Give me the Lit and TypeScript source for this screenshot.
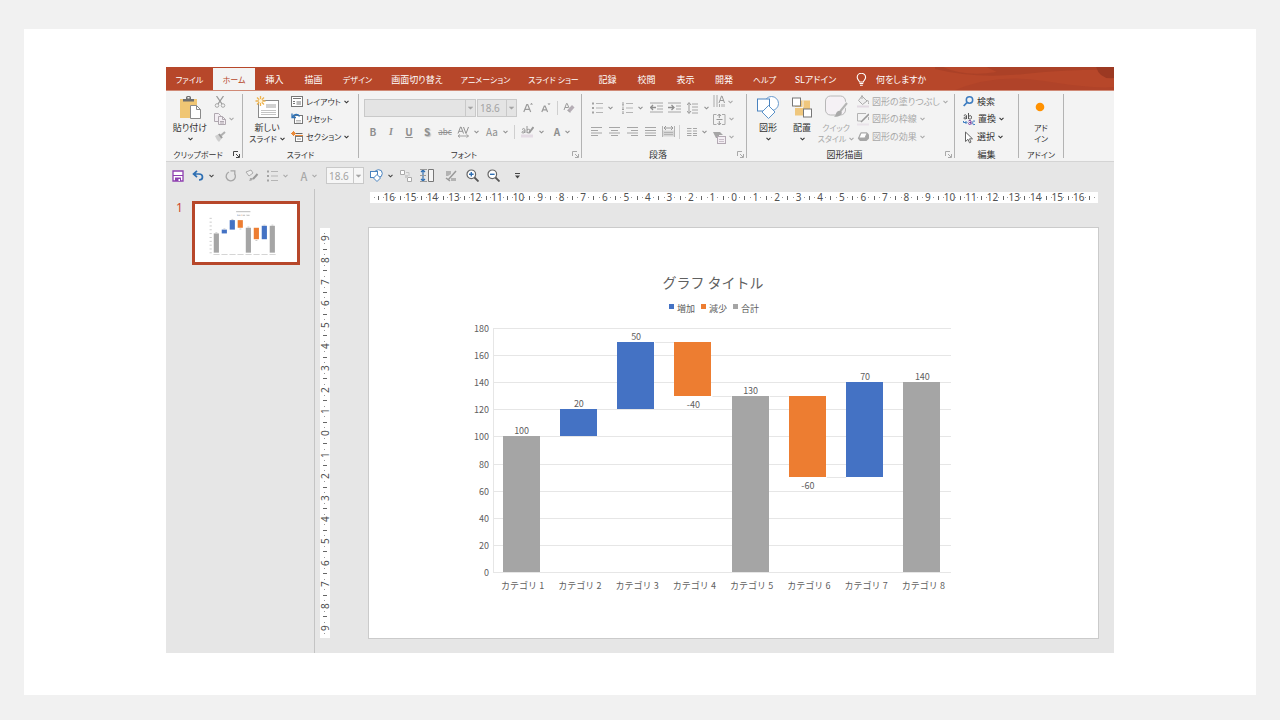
import { LitElement, html, svg, css, type TemplateResult } from "lit";
import { customElement, property, state } from "lit/decorators.js";
import { classMap } from "lit/directives/class-map.js";

type Frag = unknown;

const ic = (w: number, h: number, body: Frag) =>
  html`<svg width=${w} height=${h} viewBox="0 0 ${w} ${h}" fill="none" aria-hidden="true">${body}</svg>`;

const caret = () => ic(5, 4, svg`<path d="M.5 .8 2.5 2.8 4.5 .8" stroke="currentColor" stroke-width="1.1"/>`);

const lines = (list: number[][], c = "#a6a6a6") =>
  list.map(([x1, x2, y]) => svg`<path d="M${x1} ${y}H${x2}" stroke=${c}/>`);

const icons = {
  paste: ic(24, 25, svg`
    <rect x="2" y="4" width="17" height="19" fill="#f0c674"/>
    <path d="M5 4h3V2.500a1.500 1.500 0 0 1 1.500-1.500h2a1.500 1.500 0 0 1 1.500 1.500V4h3v2.500H5z" fill="#6d6d6d"/>
    <rect x="9.500" y="2" width="2" height="1.500" fill="#f3f3f3"/>
    <path d="M12.500 10.500h6l4 4v9h-10z" fill="#fff" stroke="#8a8a8a"/>
    <path d="M18.500 10.500v4h4" stroke="#8a8a8a"/>`),
  cut: ic(12, 12, svg`
    <path d="M2.500 0 8 8M9.500 0 4 8" stroke="#9a9a9a" stroke-width="1.300"/>
    <circle cx="3" cy="9.500" r="1.800" stroke="#a8a8a8"/><circle cx="9" cy="9.500" r="1.800" stroke="#a8a8a8"/>`),
  copy: ic(12, 12, svg`
    <path d="M.5 .5h4l2 2v6h-6z" fill="#f3eef3" stroke="#b0a8b0"/>
    <path d="M4.500 3.500h4l3 3v5h-7zM8.500 3.500v3h3M6 8.500h4M6 10h4" fill="#f3eef3" stroke="#b0a8b0"/>`),
  brush: ic(12, 12, svg`
    <path d="M1 5 5 3 8 7 5 11 3 9z" fill="#cfcfcf"/>
    <path d="M5 3 8 7" stroke="#9c9c9c" stroke-width="2"/><path d="M7 4.500 11 1" stroke="#b0b0b0" stroke-width="2"/>`),
  newSlide: ic(24, 23, svg`
    <rect x="3.500" y="4.500" width="20" height="17" fill="#fff" stroke="#8a8a8a"/>
    <rect x="11" y="8" width="10" height="4" fill="#d0d0d0"/><path d="M6 14.500h15M6 16.500h15M6 18.500h15" stroke="#c4c4c4"/>
    <path d="M5.500 0v10M.5 5h10M2 1.500l7 7M9 1.500l-7 7" stroke="#eeb34e" stroke-width="1.300"/>
    <circle cx="5.500" cy="5" r="2" fill="#fff3d6"/>`),
  layout: ic(12, 12, svg`
    <rect x=".5" y=".5" width="11" height="10" fill="#fff" stroke="#777"/>
    <path d="M2 2.500h8M2 5.500h2M2 7.500h2" stroke="#777"/><rect x="5.500" y="5" width="4.500" height="4" fill="#bbb"/>`),
  reset: ic(12, 12, svg`
    <rect x="3.500" y="2.500" width="8" height="8" fill="#fff" stroke="#777"/>
    <path d="M5 7.500h5M5 9h5" stroke="#bbb"/><path d="M1 .5v4h4M1.500 4C3 1 7 .5 8.500 3.500" stroke="#2f73b8" stroke-width="1.300"/>`),
  section: ic(12, 12, svg`
    <path d="M4.500 2.500h7" stroke="#666"/><rect x="4.500" y="5.500" width="7" height="5" fill="#fff" stroke="#777"/>
    <path d="M6 8h4" stroke="#999"/><path d="M2.500 0v5M0 2.500h5M1 1l3 3M4 1 1 4" stroke="#e98b3c"/>
    <path d="M4 4.500h8" stroke="#e98b3c"/>`),
  launcher: ic(7, 7, svg`<path d="M.5 5V.5H5M3 3l3 3M6.500 3v3.500H3" stroke="currentColor"/>`),
  growA: ic(10, 11, svg`<path d="M.8 10 3.800 2.500h.9L7.700 10M2 7.300h4.500" stroke="#9b9b9b" stroke-width="1.200"/><path d="M7 2.500 8.500 1 10 2.500z" fill="#888"/>`),
  shrinkA: ic(10, 11, svg`<path d="M.8 10 3.300 4h.8L6.600 10M1.800 7.800h3.800" stroke="#9b9b9b" stroke-width="1.200"/><path d="M6.500 1.500h3L8 3z" fill="#888"/>`),
  clear: ic(12, 12, svg`
    <path d="M1 8 3.500 1.500h.7L6 6M2 5.500h3" stroke="#9b9b9b"/><path d="M4.500 8 9 3l2.500 2.500L7 10.500z" fill="#b5adb5"/>
    <path d="M4.500 8 7 10.500" stroke="#999"/>`),
  spacing: ic(13, 12, svg`
    <path d="M1 7.500 3.500 1h.6l2.400 6.500M2 5.300h3.600M6.500 1l2.500 6.500L11.500 1" stroke="#929292"/>
    <path d="M1 10h10.500M3 8.500 1 10l2 1.500M9.500 8.500l2 1.500-2 1.500" stroke="#a3a3a3"/>`),
  marker: ic(13, 13, svg`
    <path d="M1 4.500q2-2 3 0v3.300M4 6C1 5.500 0 8 2 8q1 0 2-1M6 1v7M6 5q3-2 3 1t-3 1.500" stroke="#969696"/>
    <path d="M12.500 2 8 8" stroke="#999" stroke-width="2"/><path d="M0 11h12" stroke="#e4dbe4" stroke-width="3"/>`),
  bullets: ic(11, 12, svg`${[1.5, 6, 10.5].map((y) => svg`<rect x="0" y=${y - 1} width="2" height="2" fill="#a3a3a3"/><path d="M4 ${y}h7" stroke="#b5b5b5"/>`)}`),
  numbers: ic(11, 12, svg`${[1.5, 6, 10.5].map((y) => svg`<path d="M1 ${y - 1.5}v3M0 ${y + 1.5}h2" stroke="#9f9f9f"/><path d="M4 ${y}h7" stroke="#b5b5b5"/>`)}`),
  outdent: ic(13, 11, svg`${lines([[0, 13, 1], [7, 13, 4], [7, 13, 7], [0, 13, 10]])}<path d="M0 5.500h6M3 3 .7 5.500 3 8" stroke="#8e8e8e" stroke-width="1.300"/>`),
  indent: ic(13, 11, svg`${lines([[0, 13, 1], [8, 13, 4], [8, 13, 7], [0, 13, 10]])}<path d="M0 5.500h6M3.500 3 6 5.500 3.500 8" stroke="#8e8e8e" stroke-width="1.300"/>`),
  lineSpace: ic(12, 12, svg`${lines([[5, 11, 2], [5, 11, 5], [5, 11, 8], [5, 11, 11]])}<path d="M2 1v10M0 3l2-2.500L4 3M0 9l2 2.500L4 9" stroke="#999"/>`),
  left: ic(11, 9, svg`${lines([[0, 11, .5], [0, 7, 3.5], [0, 11, 6], [0, 7, 8.5]])}`),
  center: ic(11, 9, svg`${lines([[0, 11, .5], [2, 9, 3.5], [0, 11, 6], [2, 9, 8.5]])}`),
  right: ic(11, 9, svg`${lines([[0, 11, .5], [4, 11, 3.5], [0, 11, 6], [4, 11, 8.5]])}`),
  justify: ic(11, 9, svg`${lines([[0, 11, .5], [0, 11, 3.5], [0, 11, 6], [0, 11, 8.5]])}`),
  distribute: ic(13, 13, svg`
    <path d="M.5 1v11M12.500 1v11" stroke="#b3b3b3"/><path d="M2 3h9M4 1 2 3l2 2M9 1l2 2-2 2" stroke="#999"/>
    <rect x="1" y="5.500" width="11" height="6" fill="#d6d6d6"/><path d="M2 7.500h9M2 9.500h9" stroke="#b3b3b3"/>`),
  columns: ic(10, 8, svg`${lines([[0, 4.5, .5], [0, 4.5, 3], [0, 4.5, 5.5], [0, 4.5, 7.5], [6, 10, .5], [6, 10, 3], [6, 10, 5.5], [6, 10, 7.5]])}`),
  textDir: ic(12, 13, svg`<path d="M1 0v12M4 0v12M9 9v3M6.500 9v3M11 9v3" stroke="#aaa"/><path d="M6 8 8.500 1h.5L11.500 8M7 5.500h4" stroke="#999"/>`),
  alignText: ic(13, 13, svg`<path d="M3.500 1.500h-3v10h3M9 1.500h3v10H9" stroke="#aaa"/><path d="M6.300 1v4M6.300 8v4M4.500 3l1.800-2L8 3M4.500 10l1.800 2L8 10M3.500 6.500h6" stroke="#999"/>`),
  smartArt: ic(13, 13, svg`<path d="M0 1h7l3 3H6v3H3z" fill="#a5a5a5"/><rect x="4.500" y="5.500" width="8" height="7" fill="#f3eef3" stroke="#b3a9b3"/><path d="M6 8.500h5M6 10.500h5" stroke="#c9bfc9"/>`),
  shapes: ic(24, 24, svg`
    <circle cx="15.500" cy="8" r="7" fill="#fff" stroke="#6a9ccf"/>
    <rect x="1.500" y="3.500" width="12" height="12" fill="#fff" stroke="#4a83bf"/>
    <path d="M12.500 10 19 16.500 12.500 23 6 16.500z" fill="#fff" stroke="#5b92c8"/>`),
  arrange: ic(22, 22, svg`
    <rect x="4" y="4" width="15" height="15" fill="#efc77d"/><path d="M4 11h8v-7" stroke="#f3f3f3"/>
    <rect x="1.500" y="1.500" width="8" height="8" fill="#fff" stroke="#777"/><rect x="12.500" y="12.500" width="8" height="8" fill="#fff" stroke="#777"/>`),
  quick: ic(23, 24, svg`
    <rect x=".5" y=".5" width="20" height="19" rx="5" fill="#f5f1f5" stroke="#b8b8b8"/>
    <path d="M22.500 7 15 16" stroke="#f3f3f3" stroke-width="4"/><path d="M22 7.500 15.500 15.500" stroke="#b4b4b4" stroke-width="2"/>
    <path d="M16 15q2 3-1 5-3 2-6 1 2-1 2-3 1-3 5-3z" fill="#a9a9a9"/>`),
  fill: ic(12, 13, svg`<path d="M5 1 10 6 5.500 9.500 1.500 5.500z" fill="#eee" stroke="#aaa"/><path d="M5 4V0M10.500 5q2 3 1 4" stroke="#aaa"/><path d="M0 11.500h12" stroke="#e1d9e1" stroke-width="2"/>`),
  outline: ic(12, 13, svg`<path d="M9 .5H.5V8H4M11.500 4v3" stroke="#b3b3b3"/><path d="M12 1 5.500 7.500 4 9" stroke="#999" stroke-width="1.600"/><path d="M0 11.500h12" stroke="#e9e3e9" stroke-width="2"/>`),
  effects: ic(12, 11, svg`<path d="M3.500.5h6.500l2 2v4l-2.500 2.500H3L.8 6.500z" fill="#a7a7a7"/><path d="M4 1h6l-2 5H2z" fill="#fff" stroke="#aaa"/>`),
  search: ic(11, 11, svg`<circle cx="6.500" cy="4" r="3.200" stroke="#3d7cc0" stroke-width="1.500"/><path d="M4 6.500.7 10" stroke="#3d7cc0" stroke-width="1.800"/>`),
  replace: ic(12, 13, svg`
    <path d="M.8 2.500q2-1.500 2.700 0V6M3.500 4C.5 3.500.5 6 2 6q1 0 1.500-1M5.500 0v6M5.500 3.500q3-2 3 .8t-3 1.200" stroke="#555"/>
    <path d="M5.500 8q2-1.500 2.500 0v3.500M8 9.500c-3-.5-3 2-1.500 2q1 0 1.500-1" stroke="#7a3fa0"/><path d="M12 8.300Q9.700 7 9.700 9.800t2.300 1.500" stroke="#3d7cc0"/>
    <path d="M.5 8v1.500h3M2.500 8 4 9.500 2.500 11" stroke="#3d7cc0"/>`),
  select: ic(11, 13, svg`<path d="M2.500 1v9.500L5 8.300l1.500 3.500 1.500-.7-1.500-3.300h3z" fill="#fff" stroke="#666"/>`),
  dot: ic(24, 20, svg`<circle cx="11" cy="9.500" r="4.300" fill="#ff9100"/>`),
  bulb: ic(11, 13, svg`<path d="M3.500 9C3.500 7.500 1.200 6.800 1.200 4.300a4.200 4 0 0 1 8.400 0C9.600 6.800 7.300 7.500 7.300 9zM3.500 10.500h3.800M4 12.200h2.800" stroke="#fff" stroke-width="1.100"/>`),
  save: ic(12, 12, svg`<path d="M1 1h10v10H1z" fill="#fff" stroke="#8e3fb0" stroke-width="1.300"/><path d="M1 5.500h10" stroke="#8e3fb0"/><path d="M3 7.500h6V11H3z" fill="#8e3fb0"/><path d="M6.500 9H8v2H6.500z" fill="#fff"/>`),
  undo: ic(12, 11, svg`<path d="M5 .8 1.500 4 5 7.200M2 4h5q3.500 0 3.500 3T7 10" stroke="#2f6fb3" stroke-width="1.700"/>`),
  redo: ic(12, 12, svg`<path d="M4 2A4.600 4.600 0 1 0 9.500 3.500M5.500 .8h4.300V4.500" stroke="#a6a6a6" stroke-width="1.300"/>`),
  format: ic(14, 13, svg`<path d="M1 3 6 1l2 3-4 3z" fill="#eee" stroke="#aaa"/><path d="M12.500 5 8 10" stroke="#999" stroke-width="2"/><path d="M8 9q0 3-4 3 1-1 1-3z" fill="#aaa"/>`),
  shapesS: ic(13, 13, svg`<circle cx="8.500" cy="4.500" r="3.800" fill="#fff" stroke="#4a83bf"/><rect x=".5" y="2.500" width="7" height="6" fill="#fff" stroke="#4a83bf"/><path d="M7 5.500 10.500 9 7 12.500 3.500 9z" fill="#fff" stroke="#4a83bf"/>`),
  group: ic(13, 13, svg`<path d="M.5 1.500h4v4h-4zM7.500 8.500h4v4h-4z" fill="#fff" stroke="#aaa"/><path d="M5 6h3v3H5z" fill="#ccc"/><path d="M6 3.500h3V7" stroke="#c5c5c5"/>`),
  height: ic(15, 13, svg`<path d="M3 1v11M1 3l2-2 2 2M1 10l2 2 2-2" stroke="#2f6fb3" stroke-width="1.200"/><path d="M0 .5h7M0 12.500h7M0 6.500h6" stroke="#999"/><path d="M8.500.5h5v12h-5z" fill="#f5f5f5" stroke="#777"/>`),
  tools: ic(12, 12, svg`<path d="M1 1h5v3L3 6H1zM6 8h5v3H6z" fill="#b3b3b3"/><path d="M11 1 3 10M1 8l4 3" stroke="#999" stroke-width="1.500"/>`),
  zoomIn: ic(13, 13, svg`<circle cx="5.300" cy="5.300" r="4.300" fill="#fff" stroke="#666" stroke-width="1.200"/><path d="m8.500 8.500 4 4" stroke="#555" stroke-width="1.800"/><path d="M5.300 3v4.600M3 5.300h4.600" stroke="#2f6fb3" stroke-width="1.400"/>`),
  zoomOut: ic(13, 13, svg`<circle cx="5.300" cy="5.300" r="4.300" fill="#fff" stroke="#666" stroke-width="1.200"/><path d="m8.500 8.500 4 4" stroke="#555" stroke-width="1.800"/><path d="M3 5.300h4.600" stroke="#2f6fb3" stroke-width="1.400"/>`),
  more: ic(7, 6, svg`<path d="M1 .5h5" stroke="#444"/><path d="M1 2.500h5L3.500 5.500z" fill="#444"/>`),
};

/* Katakana-only captions are set one step smaller than mixed ones. */
const kana = (t: string) => /^[\u30a0-\u30ff\s]+$/.test(t);
const caption = (t: string) => html`<span class=${classMap({ kana: kana(t) })}>${t}</span>`;

/* Waterfall chart ------------------------------------------------------- */

type Kind = "up" | "down" | "total";
interface Step { value: number; kind: Kind }

const STEPS: Step[] = [
  { value: 100, kind: "total" }, { value: 20, kind: "up" }, { value: 50, kind: "up" }, { value: -40, kind: "down" },
  { value: 130, kind: "total" }, { value: -60, kind: "down" }, { value: 70, kind: "up" }, { value: 140, kind: "total" },
];
const COLORS: Record<Kind, string> = { up: "#4472c4", down: "#ed7d31", total: "#a5a5a5" };

@customElement("waterfall-chart")
class WaterfallChart extends LitElement {
  @property({ type: Boolean }) mini = false;

  static styles = css`
    :host { display: block; font-feature-settings: normal; }
    svg { display: block; width: 100%; height: 100%; }
    text { font-family: "Noto Sans CJK JP", sans-serif; font-size: 9px; fill: #606060; }
    .title { font-size: 14px; }
    .mid { text-anchor: middle; }
    .end { text-anchor: end; }
    .grid { stroke: #e6e6e6; }
    .smudge { fill: #c4c4c4; }
  `;

  render() {
    const left = 124, right = 582, top = 100, base = 344, max = 180;
    const pitch = (right - left) / STEPS.length;
    const y = (v: number) => base - (v / max) * (base - top);
    const snap = (v: number) => Math.round(v) + 0.5;
    let level = 0;
    const bars = STEPS.map((s, i) => {
      const from = s.kind === "total" ? 0 : level;
      level = s.kind === "total" ? s.value : level + s.value;
      return { ...s, hi: Math.max(from, level), lo: Math.min(from, level), end: level, cx: left + pitch * (i + 0.5) };
    });
    const half = 19;
    const label = (x: number, cy: number, t: string, cls: string, w: number, h = 6) =>
      this.mini
        ? svg`<rect class="smudge" x=${cls === "end" ? x - w : x - w / 2} y=${cy - h / 2} width=${w} height=${h}/>`
        : svg`<text class=${cls} x=${x} y=${cy + 3}>${t}</text>`;
    return html`<svg viewBox="0 0 729 410" preserveAspectRatio="none" role="img" aria-label="グラフ タイトル">
      ${this.mini
        ? svg`<rect class="smudge" x="294" y="50" width="102" height="8"/>`
        : svg`<text class="mid title" x="344" y="60">グラフ タイトル</text>`}
      ${([["up", "増加", 299], ["down", "減少", 331], ["total", "合計", 363]] as [Kind, string, number][]).map(([k, t, x]) => svg`
        <rect x=${x + 1} y="76" width="5" height="5" fill=${COLORS[k]}/>
        ${this.mini ? label(x + 18, 80, t, "mid", 18, 8) : svg`<text x=${x + 9} y="84">${t}</text>`}`)}
      ${Array.from({ length: 10 }, (_, i) => i * 20).map((v) => svg`
        ${this.mini ? "" : svg`<path class="grid" d="M${left} ${snap(y(v))}H${right}"/>`}
        ${label(120, y(v) + 1, String(v), "end", 16)}`)}
      ${this.mini ? "" : svg`<path class="grid" d="M${left + .5} ${top}V${base}"/>`}
      ${this.mini ? "" : bars.slice(0, -1).map((b) => svg`<path class="grid" d="M${b.cx + half} ${snap(y(b.end))}h${pitch - half * 2}"/>`)}
      ${bars.map((b, i) => svg`
        <rect x=${Math.round(b.cx - half)} y=${Math.round(y(b.hi))} width=${half * 2 - 1}
          height=${Math.round(y(b.lo)) - Math.round(y(b.hi))} fill=${COLORS[b.kind]}/>
        ${label(b.cx, b.value < 0 ? y(b.lo) + 9 : y(b.hi) - 5, String(b.value), "mid", 14)}
        ${label(b.cx + 1, 358, `カテゴリ ${i + 1}`, "mid", 44, 5)}`)}
    </svg>`;
  }
}

/* Ruler ----------------------------------------------------------------- */

@customElement("slide-ruler")
class SlideRuler extends LitElement {
  @property({ type: Number }) reach = 16;
  @property({ type: Boolean, reflect: true }) vertical = false;

  static styles = css`
    :host { display: flex; background: #fff; color: #505050; font: 10px/11px "Noto Sans", sans-serif; align-items: center; }
    :host([vertical]) { writing-mode: vertical-rl; transform: rotate(180deg); }
    .cell { flex: 1 1 0; display: flex; align-items: center; justify-content: center; gap: 2px; min-inline-size: 0; }
    .wide { gap: 0; }
    .dot { inline-size: 1px; block-size: 1px; background: #999; }
    .tick { inline-size: 1px; block-size: 4px; background: #666; }
    .end { inline-size: 8px; display: flex; align-items: center; justify-content: space-evenly; }
  `;

  render() {
    const nums = Array.from({ length: this.reach * 2 + 1 }, (_, i) => Math.abs(i - this.reach));
    const tick = html`<span class="tick"></span>`;
    const dot = html`<span class="dot"></span>`;
    return html`
      ${this.vertical ? "" : html`<span class="end">${dot}</span>${tick}`}
      ${nums.map((n, i) => html`${i ? tick : ""}<span class=${classMap({ cell: true, wide: n > 9 })}>${dot}<span>${n}</span>${dot}</span>`)}
      ${this.vertical ? "" : html`${tick}<span class="end">${dot}</span>`}
    `;
  }
}

/* Application ----------------------------------------------------------- */

const TABS = ["ファイル", "ホーム", "挿入", "描画", "デザイン", "画面切り替え", "アニメーション", "スライド ショー",
  "記録", "校閲", "表示", "開発", "ヘルプ", "SLアドイン"];

@customElement("app-root")
class AppRoot extends LitElement {
  @state() private tab = 1;

  static styles = css`
    :host {
      display: flex; box-sizing: border-box; min-height: 100vh; padding: 29px 24px 25px; background: #f1f1f1;
      font: 9px/12px "Noto Sans CJK JP", sans-serif; font-feature-settings: "palt"; color: #333;
    }
    * { box-sizing: border-box; }
    svg { display: block; flex: none; }
    button, select {
      font: inherit; font-feature-settings: inherit; color: inherit; background: none; border: 0; padding: 0; margin: 0;
      white-space: nowrap;
    }
    button { display: flex; align-items: center; justify-content: center; }
    .kana { font-size: 8px; }
    .card { flex: 1; display: flex; background: #fff; padding: 38px 142px 42px; }
    .window { flex: 1; min-width: 0; display: flex; flex-direction: column; background: #e6e6e6; }

    .tabs {
      display: grid; height: 24px; overflow: hidden; background: #b7472a; color: #fff;
      grid-template-columns: 47px 42px 39px 39px 49px 70px 67px 69px 39px 39px 39px 38px 43px 59px 90px 1fr;
    }
    .tab { color: #fff; padding-top: 1px; }
    .tab.on { background: #f3f3f3; color: #b7472a; border-top: 1px solid #b7472a; padding: 0; }
    .tell { gap: 9px; justify-content: flex-start; padding-left: 11px; }
    .swirl { display: block; width: 100%; height: 24px; }

    .ribbon {
      display: flex; height: 72px; background: #f3f3f3; margin-top: -1px;
      border-top: 1px solid #d08a76; border-bottom: 1px solid #d4d4d4;
    }
    .group {
      flex: none; display: grid; grid-template-rows: 53px 1fr; padding-top: 2px;
      background: linear-gradient(#b3b3b3, #b3b3b3) right 3px / 1px 64px no-repeat;
    }
    .clip { width: 77px; } .slides { width: 116px; } .font { width: 223px; } .para { width: 165px; }
    .draw { width: 208px; } .edit { width: 64px; } .addin { width: 45px; }
    .body { display: flex; min-width: 0; }
    .foot { display: flex; align-items: center; padding: 2px 1px 0 0; }
    .foot button { width: 12px; height: 12px; color: #444; }
    .foot .pale { color: #a9a9a9; }
    .foot > span { flex: 1; text-align: center; white-space: nowrap; }
    .big { flex-direction: column; justify-content: flex-start; width: 48px; padding-top: 2px; line-height: 11px; }
    .big > svg:first-child { height: 25px; margin-bottom: 2px; }
    .big > svg:last-child { margin-top: 4px; }
    .line { display: flex; align-items: center; gap: 3px; }
    .rows { display: grid; grid-template-rows: repeat(3, 1fr); justify-items: start; }
    .rows button { gap: 3px; }
    .off { color: #a8a8a8; }
    .inset { padding-left: 8px; }
    .snug { padding-left: 4px; }
    .trio { display: flex; padding-left: 4px; }
    .trio .big { width: 34px; }
    .addin .big { width: 44px; }
    .tools { display: flex; flex-direction: column; padding: 4px 0 0 5px; gap: 3px; }
    .bar { display: flex; align-items: center; height: 21px; }
    .b { width: 18px; height: 18px; font-size: 10px; color: #8f8f8f; }
    .b.w { width: 30px; gap: 5px; }
    .b.m { width: 28px; gap: 4px; }
    .bold { font-weight: 700; }
    .it { font-style: italic; font-family: "Liberation Serif", serif; font-weight: 700; }
    .un { text-decoration: underline; font-weight: 700; }
    .sh { font-weight: 700; text-shadow: 1px 1px 1px #bbb; }
    .st { text-decoration: line-through; font-size: 8px; }
    .sep { width: 1px; height: 14px; background: #cfcfcf; margin: 0 2px; }
    .combo { display: flex; align-items: center; height: 18px; border: 1px solid #c9c9c9; background: #e4e4e4; color: #a3a3a3; }
    .combo select { flex: 1; min-width: 0; height: 16px; padding-left: 2px; appearance: none; opacity: 1; font: 10px/14px "Noto Sans", sans-serif; }
    .combo .arrow { display: flex; justify-content: center; align-items: center; width: 10px; align-self: stretch; border-left: 1px solid #c9c9c9; }
    .arrow svg path { fill: currentColor; }
    .face { width: 112px; margin-right: 1px; }
    .size { width: 40px; margin-right: 2px; }
    .qsize { width: 38px; height: 17px; background: #f6f6f6; margin: 0 1px; }

    .quick { display: flex; align-items: center; height: 27px; padding-left: 3px; flex: none; color: #444; }
    .q { height: 20px; width: 18px; }
    .q.w { width: 32px; gap: 5px; }
    .q24 { width: 24px; }
    .q.off { color: #a8a8a8; }
    .q.letter { font-size: 11px; font-weight: 500; }

    .work { flex: 1; display: flex; min-height: 0; }
    .thumbs { flex: none; width: 149px; border-right: 1px solid #c4c4c4; padding: 12px 14px 0 10px; display: flex; gap: 9px; align-items: flex-start; }
    .num { width: 7px; color: #d0492b; font: 12px/14px "Noto Sans", sans-serif; }
    .thumb { flex: 1; display: block; border: 3px solid #b7472a; background: #fff; }
    .thumb waterfall-chart { aspect-ratio: 102 / 58; width: 100%; }
    .stage {
      flex: 1; min-width: 0; display: grid; padding: 3px 15px 14px 5px;
      grid-template: 11px 1fr / 10px 1fr; gap: 24px 38px;
    }
    .hr { grid-column: 2; margin: 0 1px 0 2px; }
    .vr { margin: 1px 0; }
    .slide { background: #fff; border: 1px solid #cbcbcb; }
  `;

  private big(icon: TemplateResult, l1: string, l2: string | null, off = false, drop = true) {
    return html`<button class=${classMap({ big: true, off })}>${icon}${caption(l1)}${
      l2 === null ? caret() : html`<span class="line">${caption(l2)}${drop ? caret() : ""}</span>`}</button>`;
  }

  private row(icon: TemplateResult, text: string, drop = true, off = false) {
    return html`<button class=${classMap({ off })}>${icon}${caption(text)}${drop ? caret() : ""}</button>`;
  }

  private iconRow(icon: TemplateResult, name: string, drop = true) {
    return html`<button class="off" aria-label=${name}>${icon}${drop ? caret() : ""}</button>`;
  }

  private tool(body: unknown, name: string, cls = "", drop = false) {
    return html`<button class="b ${cls}" aria-label=${name}>${body}${drop ? caret() : ""}</button>`;
  }

  private quick(body: unknown, name: string, cls = "", drop = false) {
    return html`<button class="q ${cls}" aria-label=${name}>${body}${drop ? caret() : ""}</button>`;
  }

  private combo(cls: string, name: string, value: string) {
    return html`<label class="combo ${cls}"><select aria-label=${name} disabled><option>${value}</option></select>
      <span class="arrow">${caret()}</span></label>`;
  }

  private foot(text: string, launch = "") {
    return html`<div class="foot">${caption(text)}${launch ? html`<button class=${launch} aria-label="${text}の詳細">${icons.launcher}</button>` : ""}</div>`;
  }

  render() {
    return html`<div class="card"><main class="window">
      <nav class="tabs">
        ${TABS.map((t, i) => html`<button class=${classMap({ tab: true, on: i === this.tab })} @click=${() => (this.tab = i)}>${caption(t)}</button>`)}
        <button class="tab tell">${icons.bulb}何をしますか</button>
        <svg class="swirl" viewBox="0 0 180 24" preserveAspectRatio="none" aria-hidden="true">
          <path d="M0 2Q40 12 90 7T180 3V0H0z" fill="#ab4127"/>
          <path d="M8 0Q30 10 62 5L52 0z" fill="#b7472a"/>
          <path d="M18 24Q60 6 110 14T180 20v4z" fill="#b04329"/>
          <path d="M162 0q4 13 18 11V0z" fill="#9c3922"/>
        </svg>
      </nav>

      <section class="ribbon">
        <div class="group clip">
          <div class="body">
            ${this.big(icons.paste, "貼り付け", null)}
            <div class="rows">
              ${this.iconRow(icons.cut, "切り取り", false)}${this.iconRow(icons.copy, "コピー")}${this.iconRow(icons.brush, "書式のコピー", false)}
            </div>
          </div>
          ${this.foot("クリップボード", "dark")}
        </div>
        <div class="group slides">
          <div class="body">
            ${this.big(icons.newSlide, "新しい", "スライド")}
            <div class="rows">
              ${this.row(icons.layout, "レイアウト")}${this.row(icons.reset, "リセット", false)}${this.row(icons.section, "セクション")}
            </div>
          </div>
          ${this.foot("スライド")}
        </div>
        <div class="group font">
          <div class="tools">
            <div class="bar">
              ${this.combo("face", "フォント名", "")}${this.combo("size", "フォント サイズ", "18.6")}
              ${this.tool(icons.growA, "拡大")}${this.tool(icons.shrinkA, "縮小")}<span class="sep"></span>${this.tool(icons.clear, "書式のクリア")}
            </div>
            <div class="bar">
              ${this.tool("B", "太字", "bold")}${this.tool("I", "斜体", "it")}${this.tool("U", "下線", "un")}${this.tool("S", "影", "sh")}
              ${this.tool("abc", "取り消し線", "st")}${this.tool(icons.spacing, "文字の間隔", "m", true)}${this.tool("Aa", "文字種", "w", true)}
              <span class="sep"></span>${this.tool(icons.marker, "蛍光ペン", "w", true)}${this.tool("A", "文字の色", "w bold", true)}
            </div>
          </div>
          ${this.foot("フォント", "pale")}
        </div>
        <div class="group para">
          <div class="body off">
            <div class="tools">
              <div class="bar">
                ${this.tool(icons.bullets, "箇条書き", "w", true)}${this.tool(icons.numbers, "段落番号", "w", true)}
                ${this.tool(icons.outdent, "インデント解除")}${this.tool(icons.indent, "インデント")}${this.tool(icons.lineSpace, "行間", "w", true)}
              </div>
              <div class="bar">
                ${this.tool(icons.left, "左揃え")}${this.tool(icons.center, "中央揃え")}${this.tool(icons.right, "右揃え")}
                ${this.tool(icons.justify, "両端揃え")}${this.tool(icons.distribute, "均等割り付け")}
                <span class="sep"></span>${this.tool(icons.columns, "段組み", "w", true)}
              </div>
            </div>
            <div class="rows">
              ${this.iconRow(icons.textDir, "文字列の方向")}${this.iconRow(icons.alignText, "文字の配置")}${this.iconRow(icons.smartArt, "SmartArt に変換")}
            </div>
          </div>
          ${this.foot("段落", "pale")}
        </div>
        <div class="group draw">
          <div class="body">
            <div class="trio">
              ${this.big(icons.shapes, "図形", null)}${this.big(icons.arrange, "配置", null)}${this.big(icons.quick, "クイック", "スタイル", true)}
            </div>
            <div class="rows snug">
              ${this.row(icons.fill, "図形の塗りつぶし", true, true)}${this.row(icons.outline, "図形の枠線", true, true)}${this.row(icons.effects, "図形の効果", true, true)}
            </div>
          </div>
          ${this.foot("図形描画", "pale")}
        </div>
        <div class="group edit">
          <div class="rows inset">
            ${this.row(icons.search, "検索", false)}${this.row(icons.replace, "置換")}${this.row(icons.select, "選択")}
          </div>
          ${this.foot("編集")}
        </div>
        <div class="group addin">
          <div class="body">${this.big(icons.dot, "アド", "イン", false, false)}</div>
          ${this.foot("アドイン")}
        </div>
      </section>

      <section class="quick">
        ${this.quick(icons.save, "保存")}${this.quick(icons.undo, "元に戻す", "w", true)}${this.quick(icons.redo, "やり直し", "q24")}
        ${this.quick(icons.format, "書式")}${this.quick(icons.bullets, "箇条書き", "w off", true)}${this.quick("A", "文字の色", "w off letter", true)}
        ${this.combo("qsize", "サイズ", "18.6")}
        ${this.quick(icons.shapesS, "図形", "w", true)}${this.quick(icons.group, "グループ化")}${this.quick(icons.height, "高さ", "q24")}
        ${this.quick(icons.tools, "編集", "q24")}${this.quick(icons.zoomIn, "ズームイン")}${this.quick(icons.zoomOut, "ズームアウト", "q24")}${this.quick(icons.more, "その他", "q24")}
      </section>

      <section class="work">
        <aside class="thumbs"><span class="num">1</span><div class="thumb"><waterfall-chart mini></waterfall-chart></div></aside>
        <div class="stage">
          <slide-ruler class="hr" .reach=${16}></slide-ruler>
          <slide-ruler class="vr" vertical .reach=${9}></slide-ruler>
          <waterfall-chart class="slide"></waterfall-chart>
        </div>
      </section>
    </main></div>`;
  }
}
